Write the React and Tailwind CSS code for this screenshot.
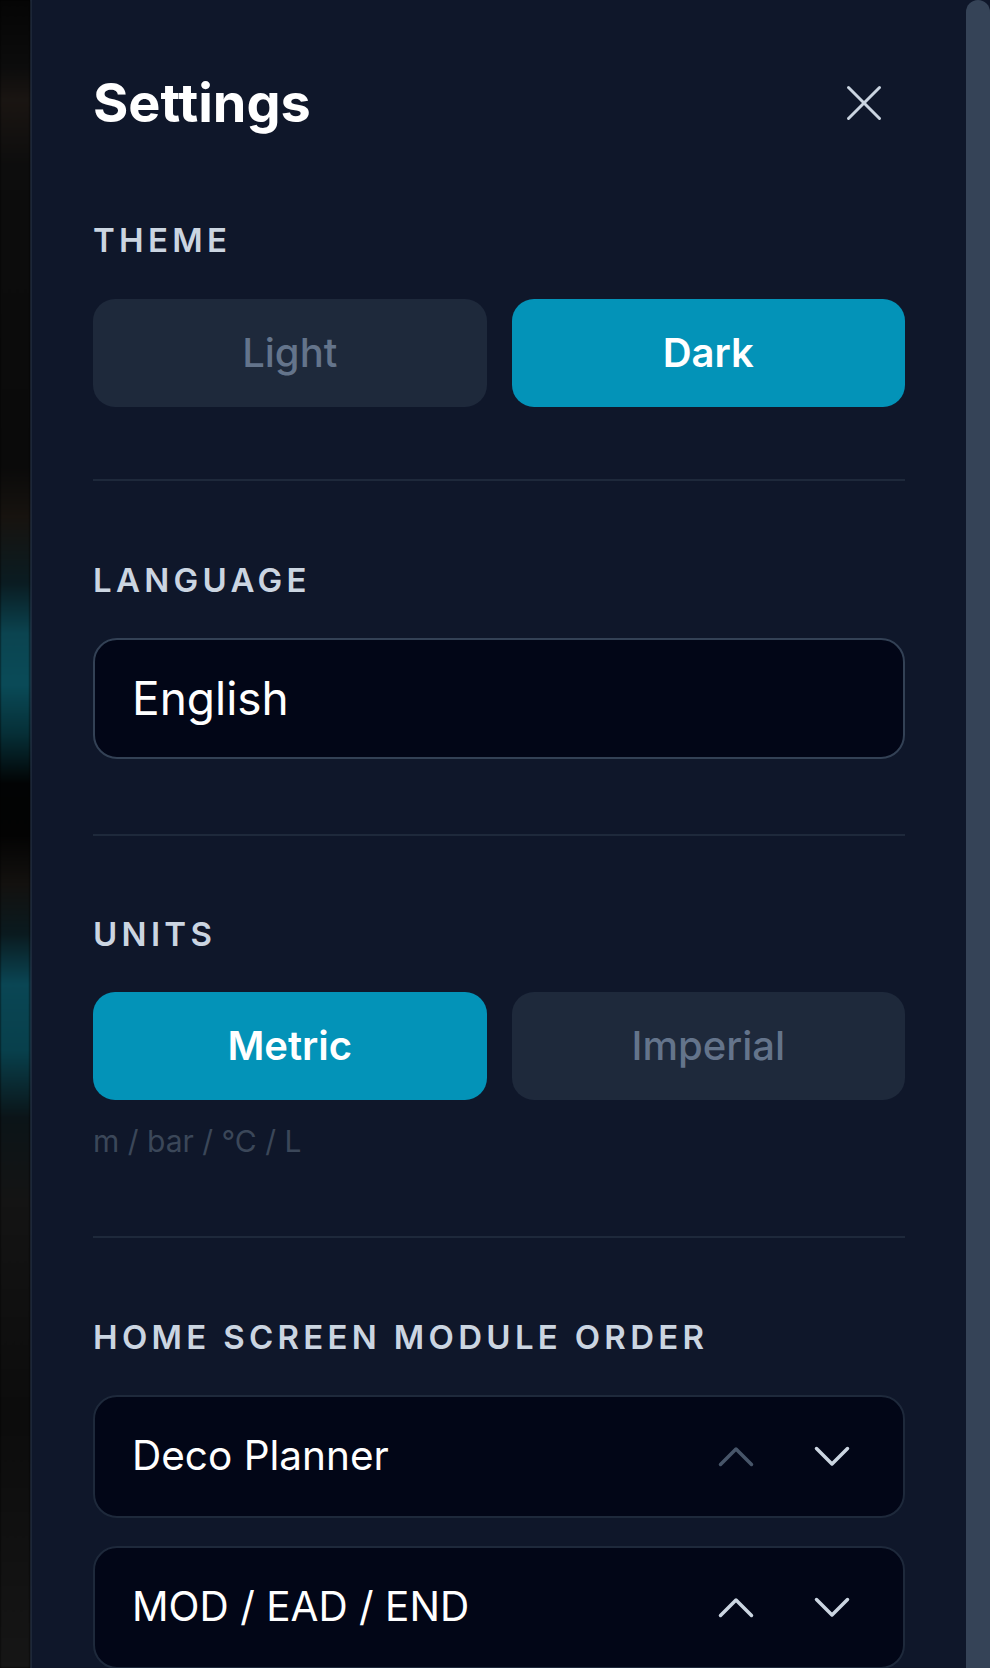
import React, { useState } from "react";

const modulesInit = ["Deco Planner", "MOD / EAD / END"];

const Label = ({ children }) => (
  <h3 className="text-[33px] leading-[40px] font-semibold tracking-[0.13em] text-[#cbd5e1] uppercase">
    {children}
  </h3>
);

const Divider = () => <div className="h-[2px] bg-[#1e293b]" />;

const Toggle = ({ options, value, onChange }) => (
  <div className="grid grid-cols-2 gap-[25px]">
    {options.map((opt) => (
      <button
        key={opt}
        onClick={() => onChange(opt)}
        className={`h-[108px] rounded-[22px] flex items-center justify-center text-[40px] ${
          value === opt
            ? "bg-[#0393b8] text-white font-semibold"
            : "bg-[#1e293b] text-[#64748b] font-medium"
        }`}
      >
        {opt}
      </button>
    ))}
  </div>
);

const Chevron = ({ up, disabled }) => (
  <button className="w-[58px] h-[58px] flex items-center justify-center">
    <svg
      width="36"
      height="21"
      viewBox="0 0 36 21"
      fill="none"
      stroke={disabled ? "#475569" : "#cbd5e1"}
      strokeWidth="3.5"
      strokeLinecap="round"
      strokeLinejoin="round"
    >
      {up ? (
        <polyline points="2.5,18.5 18,3 33.5,18.5" />
      ) : (
        <polyline points="2.5,2.5 18,18 33.5,2.5" />
      )}
    </svg>
  </button>
);

const App = () => {
  const [theme, setTheme] = useState("Dark");
  const [units, setUnits] = useState("Metric");
  const [modules] = useState(modulesInit);

  return (
    <div className="flex h-[1668px] overflow-hidden bg-black font-['Inter','Liberation_Sans',sans-serif]">
      {/* blurred backdrop peeking out on the left */}
      <div className="w-[30px] shrink-0 bg-[linear-gradient(180deg,#050505_0%,#0c0c0c_4%,#1a1512_6%,#0d0d0d_10%,#0a0a0a_28%,#17130f_31%,#0a1c22_35%,#0b4450_38%,#0a4b58_41%,#062f37_44%,#020304_47%,#030303_50%,#13110f_53%,#0a1a1f_56%,#0a4654_59%,#08404c_63%,#0b1418_67%,#141414_72%,#0c0c0c_85%,#161616_100%)] blur-[1px]" />

      {/* panel */}
      <div className="flex-1 bg-[#0f172a] border-l-2 border-[#1e293b] pl-[61px] pr-[61px] pt-[71px]">
        <div className="flex items-center justify-between">
          <h2 className="text-[54px] leading-[64px] font-bold text-white">Settings</h2>
          <button className="mr-[23px]">
            <svg
              width="36"
              height="36"
              viewBox="0 0 36 36"
              fill="none"
              stroke="#cbd5e1"
              strokeWidth="3"
              strokeLinecap="round"
            >
              <line x1="2.5" y1="2.5" x2="33.5" y2="33.5" />
              <line x1="33.5" y1="2.5" x2="2.5" y2="33.5" />
            </svg>
          </button>
        </div>

        {/* Theme */}
        <div className="mt-[85px]">
          <Label>Theme</Label>
          <div className="mt-[39px]">
            <Toggle options={["Light", "Dark"]} value={theme} onChange={setTheme} />
          </div>
        </div>

        <div className="mt-[72px]">
          <Divider />
        </div>

        {/* Language */}
        <div className="mt-[79px]">
          <Label>Language</Label>
          <div className="mt-[38px] h-[121px] rounded-[24px] border-2 border-[#334155] bg-[#020617] pl-[37px] flex items-center">
            <span className="text-[46px] text-white">English</span>
          </div>
        </div>

        <div className="mt-[75px]">
          <Divider />
        </div>

        {/* Units */}
        <div className="mt-[78px]">
          <Label>Units</Label>
          <div className="mt-[38px]">
            <Toggle options={["Metric", "Imperial"]} value={units} onChange={setUnits} />
          </div>
          <p className="mt-[22px] text-[30px] leading-[38px] text-[#3b4759]">m / bar / °C / L</p>
        </div>

        <div className="mt-[76px]">
          <Divider />
        </div>

        {/* Module order */}
        <div className="mt-[79px]">
          <Label>Home Screen Module Order</Label>
          <div className="mt-[38px] flex flex-col gap-[28px]">
            {modules.map((m, i) => (
              <div
                key={m}
                className="h-[123px] shrink-0 rounded-[24px] border-2 border-[#1e293b] bg-[#020617] pl-[37px] pr-[42px] flex items-center justify-between"
              >
                <span className="text-[40.5px] text-white">{m}</span>
                <div className="flex items-center gap-[38px]">
                  <Chevron up disabled={i === 0} />
                  <Chevron />
                </div>
              </div>
            ))}
          </div>
        </div>
      </div>

      {/* scrollbar */}
      <div className="w-[24px] shrink-0 bg-[#0f172a]">
        <div className="h-full rounded-t-full bg-[#354357]" />
      </div>
    </div>
  );
};

export default App;
